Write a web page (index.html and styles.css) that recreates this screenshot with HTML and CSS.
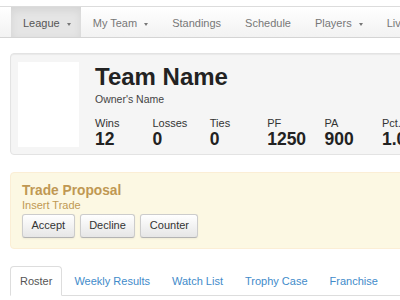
FILE: index.html
```html
<!DOCTYPE html>
<html lang="en">
<head>
    <meta charset="UTF-8">
    <meta name="viewport" content="width=device-width, initial-scale=1.0">
    <title>Team</title>
    <link rel="stylesheet" href="styles.css">
</head>
<body>
    <div class="page">
        <div class="navbar">
            <ul class="nav">
                <li class="active"><a href="#">League<span class="caret"></span></a></li>
                <li><a href="#">My Team<span class="caret"></span></a></li>
                <li><a href="#">Standings</a></li>
                <li><a href="#">Schedule</a></li>
                <li><a href="#">Players<span class="caret"></span></a></li>
                <li><a href="#">Live Scoring</a></li>
            </ul>
        </div>

        <div class="content">
            <div class="well team-header">
                <div class="team-logo"></div>
                <div class="team-info">
                    <h1 class="team-name">Team Name</h1>
                    <div class="owner">Owner's Name</div>
                    <div class="stats">
                        <div class="stat"><div class="stat-label">Wins</div><div class="stat-value">12</div></div>
                        <div class="stat"><div class="stat-label">Losses</div><div class="stat-value">0</div></div>
                        <div class="stat"><div class="stat-label">Ties</div><div class="stat-value">0</div></div>
                        <div class="stat"><div class="stat-label">PF</div><div class="stat-value">1250</div></div>
                        <div class="stat"><div class="stat-label">PA</div><div class="stat-value">900</div></div>
                        <div class="stat"><div class="stat-label">Pct.</div><div class="stat-value">1.000</div></div>
                    </div>
                </div>
            </div>

            <div class="alert">
                <h4 class="alert-title">Trade Proposal</h4>
                <div class="alert-text">Insert Trade</div>
                <div class="btn-row">
                    <button class="btn">Accept</button>
                    <button class="btn">Decline</button>
                    <button class="btn">Counter</button>
                </div>
            </div>

            <ul class="tabs">
                <li class="active"><a href="#">Roster</a></li>
                <li><a href="#">Weekly Results</a></li>
                <li><a href="#">Watch List</a></li>
                <li><a href="#">Trophy Case</a></li>
                <li><a href="#">Franchise</a></li>
                <li><a href="#">History</a></li>
            </ul>
        </div>
    </div>
</body>
</html>
```

FILE: styles.css
```css
body {
    margin: 0;
    font-family: "Liberation Sans", Arial, sans-serif;
    font-size: 11px;
    color: #333;
    background: #fff;
    overflow: hidden;
}
.page {
    width: 760px;
    padding-top: 6px;
}
.navbar {
    background: linear-gradient(to bottom, #ffffff, #f2f2f2);
    border-top: 1px solid #dcdcdc;
    border-bottom: 1px solid #d4d4d4;
    padding-left: 11px;
}
.nav {
    display: flex;
    list-style: none;
    margin: 0;
    padding: 0;
}
.nav a {
    display: block;
    padding: 9px 12px 7px 12px;
    line-height: 14px;
    color: #777;
    text-decoration: none;
}
.nav .active a {
    padding-right: 10px;
    background: #e5e5e5;
    color: #555;
    box-shadow: inset 0 3px 8px rgba(0, 0, 0, 0.08);
}
.caret {
    display: inline-block;
    width: 0;
    height: 0;
    margin-left: 7px;
    vertical-align: middle;
    border-top: 3px solid #777;
    border-left: 2.5px solid transparent;
    border-right: 2.5px solid transparent;
}
.content {
    padding: 15px 0 0 10px;
}
.well {
    background: #f5f5f5;
    border: 1px solid #e3e3e3;
    border-radius: 4px;
    box-shadow: inset 0 1px 1px rgba(0, 0, 0, 0.05);
}
.team-header {
    display: flex;
    padding: 9px 8px 6px 7px;
}
.team-logo {
    width: 61px;
    height: 85px;
    margin-top: -1px;
    background: #fff;
}
.team-info {
    margin-left: 16px;
}
.team-name {
    margin: 0;
    font-size: 24px;
    line-height: 27px;
    font-weight: bold;
    color: #222;
}
.owner {
    margin-top: 3px;
    font-size: 10.5px;
    line-height: 13px;
    color: #444;
}
.stats {
    display: flex;
    margin-top: 11px;
}
.stat {
    width: 57.4px;
}
.stat-label {
    line-height: 13px;
    color: #333;
}
.stat-value {
    font-size: 17.5px;
    line-height: 18px;
    font-weight: bold;
    color: #222;
}
.alert {
    margin-top: 17px;
    padding: 9px 11px 10px;
    background: #fcf8e3;
    border: 1px solid #fbeed5;
    border-radius: 4px;
    color: #c09853;
}
.alert-title {
    margin: 0;
    font-size: 13.75px;
    line-height: 17px;
    font-weight: bold;
}
.alert-text {
    line-height: 13px;
}
.btn-row {
    display: flex;
    gap: 5px;
    margin-top: 2px;
}
.btn {
    font-family: inherit;
    font-size: 11px;
    line-height: 13px;
    padding: 4px 8.5px 5px;
    color: #333;
    background: linear-gradient(to bottom, #ffffff, #e6e6e6);
    border: 1px solid #cccccc;
    border-bottom-color: #b3b3b3;
    border-radius: 3px;
    box-shadow: inset 0 1px 0 rgba(255, 255, 255, 0.2), 0 1px 2px rgba(0, 0, 0, 0.05);
}
.tabs {
    display: flex;
    list-style: none;
    margin: 17px 0 0;
    padding: 0;
    border-bottom: 1px solid #ddd;
}
.tabs li {
    margin-right: 2px;
    margin-bottom: -1px;
}
.tabs a {
    display: block;
    padding: 7px 9px;
    line-height: 14px;
    color: #428bca;
    text-decoration: none;
    border: 1px solid transparent;
    border-radius: 4px 4px 0 0;
}
.tabs .active a {
    color: #555;
    background: #fff;
    border-color: #ddd #ddd transparent;
}
```
